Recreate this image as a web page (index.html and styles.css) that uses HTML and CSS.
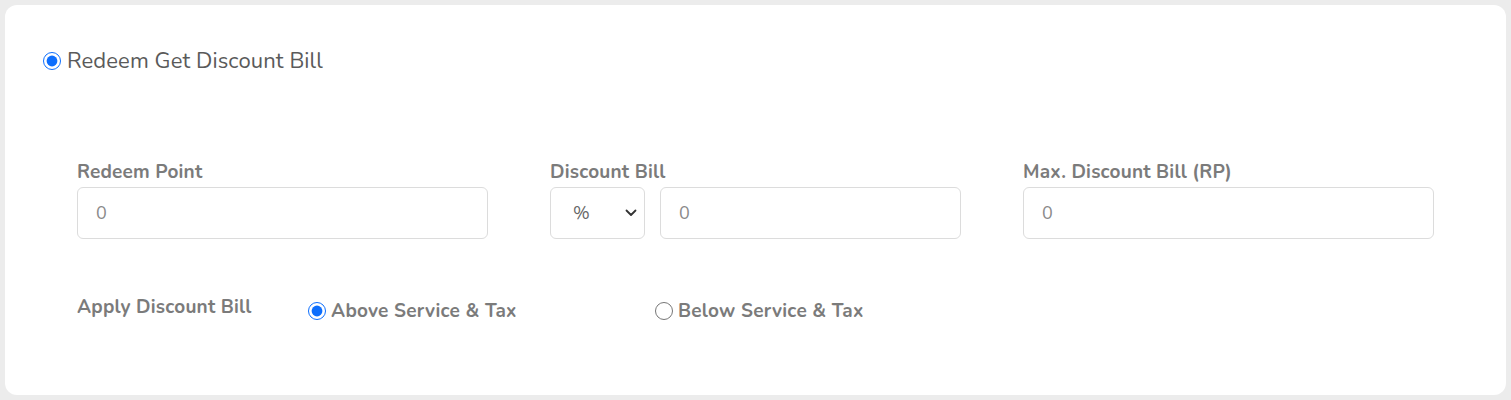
FILE: index.html
```html
<!DOCTYPE html>
<html lang="en">
<head>
  <meta charset="UTF-8">
  <title>Redeem Discount Bill</title>
  <link rel="stylesheet" href="styles.css">
</head>
<body>
  <div class="card">
    <label class="head-option">
      <input type="radio" name="redeem" checked>
      <span>Redeem Get Discount Bill</span>
    </label>

    <div class="fields">
      <div class="field">
        <label class="field-label">Redeem Point</label>
        <input class="text-input" type="text" value="0">
      </div>
      <div class="field">
        <label class="field-label">Discount Bill</label>
        <div class="input-pair">
          <div class="select-box">
            <span>%</span>
            <svg width="12" height="8" viewBox="0 0 12 8"><path d="M1.5 1.5 6 6l4.5-4.5" fill="none" stroke="#333" stroke-width="1.8" stroke-linecap="round" stroke-linejoin="round"/></svg>
          </div>
          <input class="text-input" type="text" value="0">
        </div>
      </div>
      <div class="field">
        <label class="field-label">Max. Discount Bill (RP)</label>
        <input class="text-input" type="text" value="0">
      </div>
    </div>

    <div class="apply-row">
      <span class="apply-label">Apply Discount Bill</span>
      <label class="apply-option above">
        <input type="radio" name="apply" checked>
        <span>Above Service &amp; Tax</span>
      </label>
      <label class="apply-option">
        <input type="radio" name="apply">
        <span>Below Service &amp; Tax</span>
      </label>
    </div>
  </div>
</body>
</html>
```

FILE: styles.css
```css
*{
  margin: 0;
  padding: 0;
  box-sizing: border-box;
}
body{
  background-color: #ececec;
  padding: 5px;
  font-family: "Nunito", "Lato", "Noto Sans", sans-serif;
}
.card{
  background-color: #fff;
  border-radius: 12px;
  height: 390px;
  width: 1501px;
  padding: 43px 0 0 38px;
}
.head-option{
  display: flex;
  align-items: center;
  gap: 6px;
  font-size: 22px;
  line-height: 26px;
  letter-spacing: 0.1px;
  color: #5a5a5a;
}
.head-option input,
.apply-option input{
  width: 18px;
  height: 18px;
  margin: 0;
  accent-color: #0d6efd;
}
.fields{
  display: grid;
  grid-template-columns: 411px 411px 411px;
  column-gap: 62px;
  margin: 86px 0 0 34px;
}
.field-label{
  display: block;
  font-size: 19px;
  font-weight: 700;
  letter-spacing: 0.2px;
  color: #7b7b7b;
  line-height: 24px;
  margin-bottom: 3px;
}
.text-input{
  width: 100%;
  height: 52px;
  border: 1px solid #dcdcdc;
  border-radius: 6px;
  padding: 0 18px;
  font-family: inherit;
  font-size: 18px;
  color: #8a8a8a;
  outline: none;
}
.input-pair{
  display: flex;
  gap: 15px;
}
.select-box{
  flex: 0 0 95px;
  height: 52px;
  border: 1px solid #dcdcdc;
  border-radius: 6px;
  display: flex;
  align-items: center;
  justify-content: space-between;
  padding: 0 7px 0 22px;
  font-size: 18px;
  color: #666;
}
.input-pair .text-input{
  flex: 0 0 301px;
}
.apply-row{
  display: flex;
  align-items: center;
  line-height: 24px;
  margin: 60px 0 0 34px;
}
.apply-label{
  width: 231px;
  font-size: 19px;
  font-weight: 700;
  letter-spacing: 0.2px;
  color: #7b7b7b;
  position: relative;
  top: -4px;
}
.apply-option{
  display: flex;
  align-items: center;
  gap: 5px;
  font-size: 19px;
  font-weight: 700;
  letter-spacing: 0.25px;
  color: #7b7b7b;
}
.apply-option.above{
  width: 347px;
}
```
